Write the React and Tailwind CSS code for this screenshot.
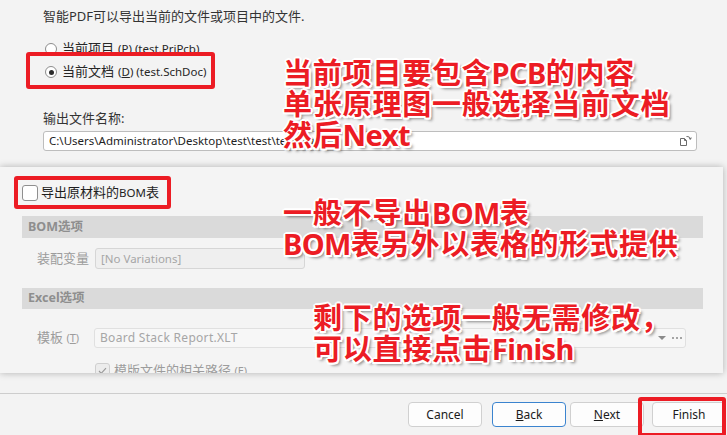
const ui = "font-['Noto_Sans','Noto_Sans_CJK_SC',sans-serif]";
const note =
  "absolute font-['Noto_Sans','Noto_Sans_CJK_SC',sans-serif] text-[29px] font-bold leading-[31px] tracking-[0.8px] text-[#ec1c24] whitespace-nowrap [text-shadow:2px_0_0_#fff,-2px_0_0_#fff,0_2px_0_#fff,0_-2px_0_#fff,1.5px_1.5px_0_#fff,-1.5px_-1.5px_0_#fff,1.5px_-1.5px_0_#fff,-1.5px_1.5px_0_#fff,3px_3px_3px_rgba(0,0,0,0.45)]";
const latin = "tracking-[-0.6px]";
const redBox = "absolute rounded-[3px] border-[4px] border-[#ec1c24]";

function Radio({ checked }) {
  return (
    <span className="flex h-[12px] w-[12px] items-center justify-center rounded-full border border-[#8d8d8d] bg-white">
      {checked && <span className="h-[5px] w-[5px] rounded-full bg-[#2b2b2b]" />}
    </span>
  );
}

function Button({ children, className = "" }) {
  return (
    <div
      className={`flex h-[25px] w-[74px] items-center justify-center rounded-[4px] border bg-[#fdfdfd] text-[12px] text-[#1b1b1b] ${className}`}
    >
      {children}
    </div>
  );
}

export default function App() {
  return (
    <div className={`relative h-[435px] w-[727px] overflow-hidden bg-[#f3f3f3] text-[#262626] ${ui}`}>
      {/* top part of the wizard */}
      <div className="h-[167px] pl-[43px] pt-[7px]">
        <p className="text-[13px] leading-[18px] text-[#333]">智能PDF可以导出当前的文件或项目中的文件.</p>

        <div className="mt-[14px] flex h-[20px] items-center pl-[2px]">
          <Radio />
          <span className="ml-[5px] text-[13px]">当前项目</span>
          <span className="ml-[4px] text-[11.5px]">
            (<span className="underline">P</span>) (test.PrjPcb)
          </span>
        </div>
        <div className="mt-[3px] flex h-[20px] items-center pl-[2px]">
          <Radio checked />
          <span className="ml-[5px] text-[13px]">当前文档</span>
          <span className="ml-[4px] text-[11.5px]">
            (<span className="underline">D</span>) (test.SchDoc)
          </span>
        </div>

        <p className="mt-[27px] text-[13px] leading-[18px] text-[#333]">输出文件名称:</p>
        <div className="mt-[4px] flex h-[20px] w-[654px] items-center justify-between rounded-[3px] border border-[#bdbdbd] bg-white pl-[5px] pr-[4px]">
          <span className="text-[11.5px] text-[#222]">C:\Users\Administrator\Desktop\test\test\test.PDF</span>
          <svg width="13" height="12" viewBox="0 0 13 12" fill="none" stroke="#6b6b6b" strokeWidth="1">
            <path d="M1.5 3.5h4l2 2v5h-6z" />
            <path d="M5.5 3.5v2h2" />
            <path d="M7.5 1.5c2 0 3.5 0.6 4 2.5" />
            <path d="M10 3.5l1.6 0.8 0.6-1.8" />
          </svg>
        </div>
      </div>

      {/* overlaid lower panel */}
      <div className="relative h-[206px] w-[723px] overflow-hidden bg-[#f4f4f4] shadow-[0_0_7px_rgba(0,0,0,0.28)]">
        <div className="ml-[22px] mt-[16px] flex h-[20px] items-center">
          <span className="h-[16px] w-[16px] rounded-[3px] border border-[#8f8f8f] bg-white" />
          <span className="ml-[3px] text-[13px] text-[#1e1e1e]">
            导出原材料的<span className="text-[11.5px]">BOM</span>表
          </span>
        </div>

        <div className="ml-[22px] mt-[13px] flex h-[22px] w-[681px] items-center bg-[#dadada] pl-[6px] text-[12.5px] font-bold text-[#8e8e8e]">
          BOM选项
        </div>
        <div className="mt-[10px] flex h-[21px] items-center pl-[37px]">
          <span className="w-[58px] text-[13px] text-[#9c9c9c]">装配变量</span>
          <div className="flex h-[21px] w-[210px] items-center rounded-[3px] border border-[#d6d6d6] bg-[#efefef] pl-[5px] text-[11.5px] text-[#a6a6a6]">
            [No Variations]
          </div>
        </div>

        <div className="ml-[22px] mt-[19px] flex h-[21px] w-[681px] items-center bg-[#dadada] pl-[6px] text-[12.5px] font-bold text-[#8e8e8e]">
          Excel选项
        </div>
        <div className="mt-[19px] flex h-[20px] items-center pl-[37px]">
          <span className="w-[57px] text-[13px] text-[#9c9c9c]">
            模板 <span className="text-[11px]">(<span className="underline">T</span>)</span>
          </span>
          <div className="flex h-[20px] w-[592px] items-center justify-between rounded-[3px] border border-[#e0e0e0] bg-[#f7f7f7] pl-[5px] pr-[3px]">
            <span className="text-[12px] tracking-[0.3px] text-[#a6a6a6]">Board Stack Report.XLT</span>
            <span className="flex items-center gap-[6px]">
              <span className="h-0 w-0 border-x-[4px] border-t-[4px] border-x-transparent border-t-[#8a8a8a]" />
              <span className="flex gap-[2px]">
                <span className="h-[2px] w-[2px] rounded-full bg-[#8a8a8a]" />
                <span className="h-[2px] w-[2px] rounded-full bg-[#8a8a8a]" />
                <span className="h-[2px] w-[2px] rounded-full bg-[#8a8a8a]" />
              </span>
            </span>
          </div>
        </div>

        <div className="ml-[95px] mt-[13px] flex items-center">
          <span className="flex h-[15px] w-[15px] items-center justify-center rounded-[3px] border border-[#cfcfcf] bg-[#ececec]">
            <svg width="9" height="8" viewBox="0 0 9 8" fill="none" stroke="#9a9a9a" strokeWidth="1.2">
              <path d="M1 4l2.2 2.3L8 1.2" />
            </svg>
          </span>
          <span className="ml-[4px] text-[13px] text-[#9c9c9c]">
            模版文件的相关路径 <span className="text-[11px]">(<span className="underline">E</span>)</span>
          </span>
        </div>
      </div>

      {/* footer */}
      <div className="h-[20px]" />
      <div className="border-t border-[#cdcdcd] pt-[8px]">
        <div className="ml-[408px] flex">
          <Button className="border-[#d0d0d0]">Cancel</Button>
          <Button className="ml-[10px] border-[#3b84cf]">
            <span className="underline">B</span>ack
          </Button>
          <Button className="ml-[4px] border-[#d0d0d0]">
            <span className="underline">N</span>ext
          </Button>
          <Button className="ml-[8px] border-[#d0d0d0]">Finish</Button>
        </div>
      </div>

      {/* annotation boxes */}
      <div className={`${redBox} left-[26px] top-[52px] h-[37px] w-[189px]`} />
      <div className={`${redBox} left-[14px] top-[176px] h-[33px] w-[157px]`} />
      <div className={`${redBox} left-[638px] top-[397px] h-[40px] w-[88px]`} />

      {/* annotation texts */}
      <div className={`${note} left-[283px] top-[57px]`}>
        <p>当前项目要包含<span className={latin}>PCB</span>的内容</p>
        <p>单张原理图一般选择当前文档</p>
        <p>然后<span className={latin}>Next</span></p>
      </div>
      <div className={`${note} left-[283px] top-[197px]`}>
        <p>一般不导出<span className={latin}>BOM</span>表</p>
        <p><span className={latin}>BOM</span>表另外以表格的形式提供</p>
      </div>
      <div className={`${note} left-[313px] top-[302px] leading-[30px]`}>
        <p>剩下的选项一般无需修改，</p>
        <p>可以直接点击<span className={latin}>Finish</span></p>
      </div>
    </div>
  );
}
